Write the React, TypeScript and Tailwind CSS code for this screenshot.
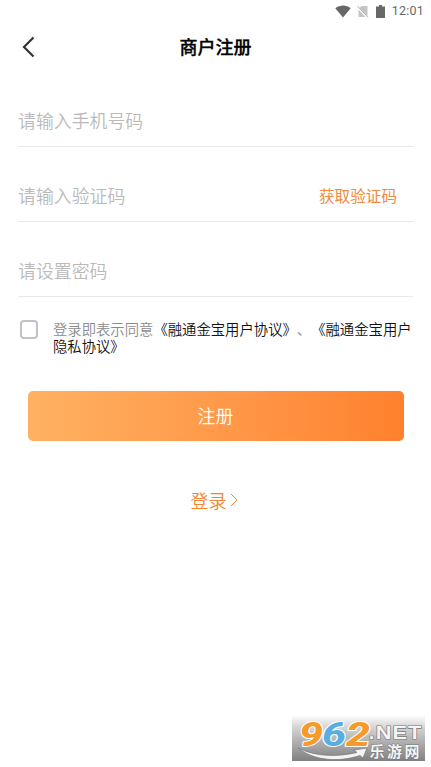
import { useState } from "react";
import type { ReactNode } from "react";

// ── Status bar ───────────────────────────────────────────────

function StatusBar() {
  return (
    <div className="flex h-[22px] items-center justify-end pr-[7px] text-[#686868]">
      <svg viewBox="0 0 16 13" className="mr-[6px] h-[13px] w-4" aria-hidden>
        <path d="M0.3 3.2C4.8-.4 11.2-.4 15.7 3.2L8 12.6Z" fill="currentColor" />
      </svg>
      {/* no sim */}
      <svg viewBox="0 0 12 13" className="mr-[7px] h-[13px] w-3" aria-hidden>
        <path d="M4.5 1H10.5V11L2.6 3Z" fill="#c4c4c4" />
        <path d="M1.5 4.5L8.5 12H1.5Z" fill="#c4c4c4" />
        <path d="M.7 1.3L11 12.3" stroke="#aaa" strokeWidth="1" />
      </svg>
      <svg viewBox="0 0 9 13" className="mr-[7px] h-[13px] w-[9px]" aria-hidden>
        <path d="M3 0H6V1.4H9V13H0V1.4H3Z" fill="currentColor" />
      </svg>
      <span className="font-[Roboto,sans-serif] text-[12.5px] font-[450] leading-[22px] tracking-[0.2px]">
        12:01
      </span>
    </div>
  );
}

// ── Form field ───────────────────────────────────────────────

function Field({
  placeholder,
  type = "text",
  children,
}: {
  placeholder: string;
  type?: string;
  children?: ReactNode;
}) {
  return (
    <div className="flex h-[75px] items-center border-b border-[#e8e8e8] pt-[21px]">
      <input
        type={type}
        placeholder={placeholder}
        className="h-9 w-0 min-w-0 flex-1 bg-transparent text-[17.9px] font-[350] text-[#333] outline-none placeholder:text-[#bababa]"
      />
      {children}
    </div>
  );
}

// ── Site mark in the bottom corner ───────────────────────────

function SiteMark() {
  return (
    <svg
      viewBox="0 0 133 46"
      className="absolute bottom-[6px] right-[6px] h-[46px] w-[133px]"
      aria-hidden
    >
      <defs>
        <linearGradient id="mark-bg" x1="0" y1="0" x2="0" y2="1">
          <stop offset="0" stopColor="#fff" />
          <stop offset="0.25" stopColor="#d6d6d6" />
          <stop offset="1" stopColor="#808080" />
        </linearGradient>
      </defs>
      <rect width="133" height="46" fill="url(#mark-bg)" />
      <g
        fontFamily="Roboto, sans-serif"
        fontWeight="800"
        fontStyle="italic"
        fontSize="34"
        stroke="#fff"
        strokeWidth="2"
        paintOrder="stroke"
        strokeLinejoin="round"
      >
        <text x="7" y="30.5" textLength="24" lengthAdjust="spacingAndGlyphs" fill="#f79a2c">9</text>
        <text x="30" y="30.5" textLength="24" lengthAdjust="spacingAndGlyphs" fill="#58aee0">6</text>
        <text x="54" y="30.5" textLength="24" lengthAdjust="spacingAndGlyphs" fill="#f79a2c">2</text>
      </g>
      <path
        d="M6 33C24 42 46 42 65 37.5L62 35L75 33L71 43L68 40.5C45 48 21 45 6 33Z"
        fill="#f4f4f4"
        stroke="#777"
        strokeWidth="0.7"
      />
      <text
        x="76.5"
        y="24"
        textLength="54"
        lengthAdjust="spacingAndGlyphs"
        letterSpacing="1"
        fontFamily="'Liberation Sans', sans-serif"
        fontWeight="700"
        fontSize="19"
        fill="#f4f4f4"
        stroke="#777"
        strokeWidth="1.2"
        paintOrder="stroke"
      >
        .NET
      </text>
      <text
        x="77.5"
        y="41.5"
        textLength="50"
        fontFamily="'Noto Sans CJK SC', sans-serif"
        fontWeight="700"
        fontSize="15"
        fill="#f4f4f4"
        stroke="#777"
        strokeWidth="1"
        paintOrder="stroke"
      >
        乐游网
      </text>
    </svg>
  );
}

// ── Register page ────────────────────────────────────────────

export default function App() {
  const [agreed, setAgreed] = useState(false);

  return (
    <div className="relative flex h-[767px] w-full flex-col overflow-hidden bg-white font-['Noto_Sans_CJK_SC',sans-serif]">
      <StatusBar />

      <header className="grid h-[50px] grid-cols-[60px_1fr_60px] items-center">
        <button className="pl-[22px]" aria-label="返回">
          <svg viewBox="0 0 14 22" className="h-[22px] w-3.5" fill="none" aria-hidden>
            <path d="M11.5 1.5L2 11L11.5 20.5" stroke="#333" strokeWidth="2.2" />
          </svg>
        </button>
        <h1 className="-mt-0.5 text-center text-[18px] font-medium leading-[26px] text-black [-webkit-text-stroke:0.3px_#000]">
          商户注册
        </h1>
      </header>

      <main className="flex flex-col pl-[18px] pr-[18px]">
        <Field placeholder="请输入手机号码" />
        <Field placeholder="请输入验证码">
          <button className="mr-4 text-[15.6px] leading-6 text-[#ee8a42]">获取验证码</button>
        </Field>
        <Field placeholder="请设置密码" type="password" />

        <div className="mt-[23px] flex items-start">
          <button
            role="checkbox"
            aria-checked={agreed}
            aria-label="同意协议"
            onClick={() => setAgreed((v) => !v)}
            className={`ml-[2px] h-[19px] w-[18px] shrink-0 rounded-[4px] border-2 border-[#bfc2c8] ${
              agreed ? "bg-[#ff8a34]" : "bg-white"
            }`}
          />
          <p className="ml-[15px] w-[362px] shrink-0 text-[14.35px] font-[350] leading-[17px] text-[#8c8c8c] [text-spacing-trim:space-all]">
            登录即表示同意<span className="text-[#111]">《融通金宝用户协议》</span>、
            <span className="text-[#111]">《融通金宝用户隐私协议》</span>
          </p>
        </div>

        <button className="ml-[9.5px] mr-[9.5px] mt-[37px] h-[50px] rounded-[5px] bg-linear-to-r from-[#ffb162] to-[#ff812d] pb-0.5 text-[17.9px] font-[350] text-white">
          注册
        </button>

        <button className="mt-[46px] mr-[3px] flex items-center self-center text-[18px] font-[350] leading-[26px] text-[#f18432]">
          登录
          <svg viewBox="0 0 8 14" className="ml-[3px] h-3.5 w-2" fill="none" aria-hidden>
            <path d="M1 1L7 7L1 13" stroke="currentColor" strokeWidth="1" />
          </svg>
        </button>
      </main>

      <SiteMark />
    </div>
  );
}
